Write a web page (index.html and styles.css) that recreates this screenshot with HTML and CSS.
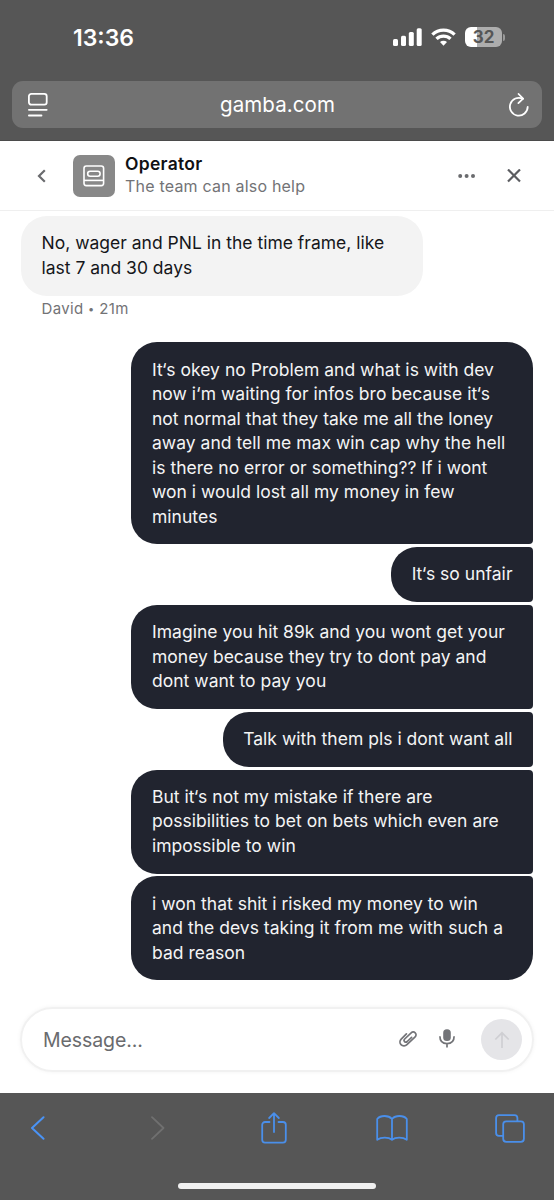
FILE: index.html
```
<!DOCTYPE html>
<html lang="en">
<head>
  <meta charset="UTF-8">
  <title>gamba.com</title>
  <meta name="viewport" content="width=device-width, initial-scale=1">
  <link rel="stylesheet" href="styles.css">
</head>
<body>
  <!-- Browser top -->
  <div class="top">
    <div class="status">
      <span class="time">13:36</span>
      <div class="status-icons">
        <svg class="signal" width="29" height="18" viewBox="0 0 29 18" fill="#fff">
          <rect x="0" y="11" width="5" height="7" rx="1.5"/>
          <rect x="8" y="7.7" width="5" height="10.3" rx="1.5"/>
          <rect x="15.8" y="4" width="5" height="14" rx="1.5"/>
          <rect x="23.7" y="0.2" width="5" height="17.8" rx="1.5"/>
        </svg>
        <svg class="wifi" width="25" height="18" viewBox="0 0 25 18" fill="none" stroke="#fff" stroke-width="3.3">
          <path d="M1.4 6.6a15.8 15.8 0 0 1 22.2 0"/>
          <path d="M5.5 10.9a10 10 0 0 1 14 0"/>
          <path d="M12.5 17.8l-3.5-3.7a5.1 5.1 0 0 1 7 0z" fill="#fff" stroke="none"/>
        </svg>
        <div class="battery"><span>32</span></div>
        <div class="battery-tip"></div>
      </div>
    </div>
    <div class="url-bar">
      <svg width="20" height="24" viewBox="0 0 20 24" fill="none" stroke="#fff" stroke-width="1.8" stroke-linecap="round">
        <rect x="0.9" y="0.9" width="17.8" height="10.8" rx="2.4"/>
        <path d="M0.9 16.8h17.8M0.9 22.5h12.6"/>
      </svg>
      <span class="url">gamba.com</span>
      <svg width="20" height="24" viewBox="0 0 20 24" fill="none" stroke="#fff" stroke-width="1.8" stroke-linecap="round" stroke-linejoin="round">
        <path d="M18.7 13.8A8.9 8.9 0 1 1 13.8 5.8"/>
        <path d="M9.6 1l4.5 4.7-4.7 4.4"/>
      </svg>
    </div>
  </div>

  <!-- Chat header -->
  <div class="chat-header">
    <svg class="back" width="9" height="14" viewBox="0 0 9 14" fill="none" stroke="#6a6b6e" stroke-width="2.2">
      <path d="M7.8 1.2L2 7l5.8 5.8"/>
    </svg>
    <div class="avatar">
      <svg width="22" height="22" viewBox="0 0 22 22" fill="none" stroke="#fff" stroke-width="1.6">
        <rect x="1" y="1" width="19.6" height="19.6" rx="2.3"/>
        <rect x="4.7" y="6.2" width="12.4" height="5" rx="2.4"/>
        <path d="M1 15.4h19.6"/>
      </svg>
    </div>
    <div class="who">
      <div class="name">Operator</div>
      <div class="sub">The team can also help</div>
    </div>
    <svg class="dots" width="18" height="4" viewBox="0 0 18 4" fill="#6a6b6e">
      <circle cx="2.2" cy="2" r="2"/><circle cx="8.6" cy="2" r="2"/><circle cx="15" cy="2" r="2"/>
    </svg>
    <svg class="close" width="14" height="14" viewBox="0 0 14 14" fill="none" stroke="#5c5d61" stroke-width="2.2">
      <path d="M1 0.5l12 12M13 0.5L1 12.5"/>
    </svg>
  </div>

  <!-- Messages -->
  <div class="messages">
    <div class="bubble in">No, wager and PNL in the time frame, like<br>last 7 and 30 days</div>
    <div class="meta">David <span class="dot">•</span> 21m</div>

    <div class="sent">
      <div class="bubble out wide">It‘s okey no Problem and what is with dev<br>now i‘m waiting for infos bro because it‘s<br>not normal that they take me all the loney<br>away and tell me max win cap why the hell<br>is there no error or something?? If i wont<br>won i would lost all my money in few<br>minutes</div>
      <div class="bubble out">It‘s so unfair</div>
      <div class="bubble out wide">Imagine you hit 89k and you wont get your<br>money because they try to dont pay and<br>dont want to pay you</div>
      <div class="bubble out">Talk with them pls i dont want all</div>
      <div class="bubble out wide">But it‘s not my mistake if there are<br>possibilities to bet on bets which even are<br>impossible to win</div>
      <div class="bubble out wide">i won that shit i risked my money to win<br>and the devs taking it from me with such a<br>bad reason</div>
    </div>
  </div>

  <!-- Message input -->
  <div class="composer">
    <span class="placeholder">Message...</span>
    <svg class="clip" width="18" height="17" viewBox="0 0 18 17" fill="none" stroke="#737478" stroke-width="1.7" stroke-linecap="round" stroke-linejoin="round">
      <path d="M7.4 2.9L2.2 8.1C0.7 9.6 0.5 12 2 13.6S6.3 15.3 7.9 13.7L15.9 6.2C17.3 4.9 17.4 3.100 16.200 1.900S13.200 0.900 11.900 2.100L5.700 8C4.900 8.800 4.900 9.900 5.600 10.600S7.400 11.200 8.200 10.500L12.600 6.300"/>
    </svg>
    <svg class="mic" width="16" height="19" viewBox="0 0 16 19" fill="none" stroke="#737478" stroke-width="1.7">
      <rect x="4.2" y="0.3" width="7.6" height="11.8" rx="3.6" fill="#737478" stroke="none"/>
      <path d="M0.9 7.3c0 4.6 2.8 7.3 7.1 7.3s7.1-2.7 7.1-7.3M8 14.600v4"/>
    </svg>
    <div class="send">
      <svg width="16" height="18" viewBox="0 0 16 18" fill="none" stroke="#cfcfd3" stroke-width="1.7">
        <path d="M8 17V2M1.3 8.5L8 1.8l6.7 6.7"/>
      </svg>
    </div>
  </div>

  <!-- Browser bottom -->
  <div class="bottom">
    <div class="toolbar">
      <svg height="24" viewBox="0 0 15 24" fill="none" stroke="#4a93f5" stroke-width="2" stroke-linecap="round" stroke-linejoin="round">
        <path d="M13 1.2L1.500 12 13 22.800"/>
      </svg>
      <svg height="24" viewBox="-2 0 15 24" fill="none" stroke="#707070" stroke-width="1.8" stroke-linecap="round" stroke-linejoin="round">
        <path d="M1.5 1.2L13 12 1.500 22.800"/>
      </svg>
      <svg height="32" viewBox="0 0 26 32" fill="none" stroke="#4a8fea" stroke-width="1.8" stroke-linecap="round" stroke-linejoin="round">
        <path d="M8.5 10H4a2.8 2.8 0 0 0-2.8 2.8v15A2.8 2.8 0 0 0 4 30.6h18a2.8 2.8 0 0 0 2.8-2.8v-15A2.8 2.8 0 0 0 22 10h-4.500"/>
        <path d="M13 20V1.200M8.200 6L13 1.200 17.800 6"/>
      </svg>
      <svg height="26" viewBox="0 0 32 26" fill="none" stroke="#4a8fea" stroke-width="1.8" stroke-linejoin="round">
        <path d="M16 4C12.500 0 4.500 0 1.200 4v20.800c4-3 11.300-3 14.800 0c3.500-3 10.800-3 14.800 0V4C27.500 0 19.500 0 16 4zM16 4v20.800"/>
      </svg>
      <svg height="29" viewBox="0 0 30 29" fill="none" stroke="#4a8fea" stroke-width="1.8">
        <path d="M8.200 21.800H4A2.900 2.900 0 0 1 1.100 18.900V4A2.900 2.900 0 0 1 4 1.100h15.500A2.900 2.900 0 0 1 22.400 4v3.300"/>
        <rect x="8.2" y="7.3" width="20.7" height="20.5" rx="3"/>
      </svg>
    </div>
    <div class="home"></div>
  </div>
</body>
</html>
```
FILE: styles.css
```
* {
  box-sizing: border-box;
}

body {
  margin: 0;
  width: 554px;
  height: 1200px;
  overflow: hidden;
  background: #fff;
  font-family: Inter, "Liberation Sans", sans-serif;
  display: flex;
  flex-direction: column;
}

svg {
  display: block;
  flex: none;
}

/* Browser top */
.top {
  height: 141px;
  background: #565656;
  padding: 0 12px;
  flex: none;
  border-bottom: 1px solid #4b4b4b;
}

.status {
  height: 81px;
  display: flex;
  justify-content: space-between;
  padding: 24px 37px 0 61px;
  color: #fff;
}

.time {
  font-size: 23px;
  line-height: 28px;
  font-weight: 600;
}

.status-icons {
  display: flex;
  align-items: center;
  height: 26px;
}

.wifi {
  margin-left: 9px;
}

.battery {
  margin-left: 9px;
  width: 37px;
  height: 20px;
  border-radius: 6px;
  background: linear-gradient(90deg, #fff 12px, #adadad 12px);
  color: #565656;
  font-size: 17px;
  font-weight: 700;
  line-height: 20px;
  text-align: center;
}

.battery-tip {
  width: 2px;
  height: 7px;
  margin-left: 1px;
  border-radius: 0 2px 2px 0;
  background: #9a9a9a;
}

.url-bar {
  height: 47px;
  border-radius: 11px;
  background: #727272;
  display: flex;
  align-items: center;
  justify-content: space-between;
  padding: 0 13px 0 16px;
}

.url {
  color: #fff;
  font-size: 20.5px;
  letter-spacing: 0.1px;
  margin-right: 2px;
}

/* Chat header */
.chat-header {
  height: 70px;
  flex: none;
  border-bottom: 1px solid #efefef;
  display: flex;
  align-items: center;
  padding: 0 33px 0 37px;
}

.avatar {
  width: 42px;
  height: 42px;
  margin-left: 27px;
  border-radius: 7px;
  background: #888;
  display: flex;
  align-items: center;
  justify-content: center;
}

.who {
  margin-left: 10px;
  padding-bottom: 2px;
  flex: 1;
}

.name {
  font-size: 17.5px;
  font-weight: 600;
  line-height: 22px;
  letter-spacing: 0.3px;
  color: #101114;
}

.sub {
  font-size: 16px;
  line-height: 22px;
  letter-spacing: 0.2px;
  color: #737376;
}

.close {
  margin-left: 31px;
}

/* Messages */
.messages {
  padding: 5px 21px 0;
  flex: 1;
}

.bubble {
  width: fit-content;
  padding: 15.25px 20.5px;
  border-radius: 26px;
  font-size: 17.5px;
  line-height: 24.5px;
  white-space: nowrap;
}

.in {
  width: 402px;
  background: #f3f3f3;
  color: #15161a;
}

.meta {
  margin: 3px 0 0 20.5px;
  font-size: 15px;
  line-height: 20px;
  letter-spacing: 0.35px;
  color: #737376;
}

.dot {
  font-size: 11px;
  vertical-align: 1px;
}

.sent {
  margin-top: 23.9px;
  display: flex;
  flex-direction: column;
  align-items: flex-end;
  gap: 2.8px;
}

.out {
  background: #21242f;
  color: #f4f4f5;
  border-radius: 26px 4px 4px 26px;
  letter-spacing: 0.02px;
}

.out:first-child {
  border-top-right-radius: 26px;
}

.out:last-child {
  border-bottom-right-radius: 26px;
}

.wide {
  width: 402px;
  padding-left: 21px;
}

/* Message input */
.composer {
  height: 65px;
  flex: none;
  margin: 0 20px 21px;
  border-radius: 33px;
  border: 2px solid #f1f1f1;
  box-shadow: 0 0 4px rgba(0, 0, 0, 0.05);
  display: flex;
  align-items: center;
  padding: 0 10px 0 21px;
}

.placeholder {
  flex: 1;
  padding-top: 1px;
  font-size: 19.5px;
  letter-spacing: -0.1px;
  color: #6a6b6e;
}

.mic {
  margin: -3px 26px 0 22px;
}

.send {
  width: 41px;
  height: 41px;
  border-radius: 50%;
  background: #e5e5e8;
  display: flex;
  align-items: center;
  justify-content: center;
}

/* Browser bottom */
.bottom {
  height: 107px;
  flex: none;
  background: #565656;
}

.toolbar {
  height: 90px;
  padding: 0 28px 20px 22px;
  display: flex;
  align-items: center;
  justify-content: space-between;
}

.toolbar svg {
  width: 32px;
}

.home {
  width: 198px;
  height: 6px;
  margin: 0 auto;
  border-radius: 3px;
  background: #f0f0f0;
}
```
